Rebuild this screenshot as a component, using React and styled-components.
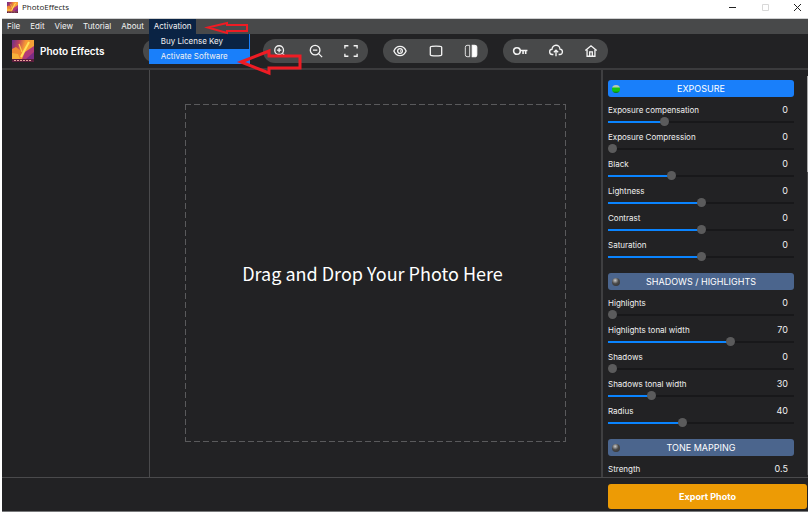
import React, { useId, useState } from 'react'
import styled, { createGlobalStyle } from 'styled-components'

const GlobalStyle = createGlobalStyle`
    * {
        box-sizing: border-box;
    }

    body {
        margin: 0;
        background: #ffffff;
        font-family: Inter, 'Liberation Sans', sans-serif;
    }

    button {
        margin: 0;
        padding: 0;
        border: 0;
        background: none;
        color: inherit;
        font: inherit;
    }
`

const Window = styled.div`
    position: relative;
    display: flex;
    flex-direction: column;
    height: 100vh;
    padding: 0 2px 3px;
`

const TitleBar = styled.header`
    display: flex;
    align-items: center;
    flex: none;
    height: 18px;
    padding: 0 6px 4px 5px;
    gap: 4px;
    color: #222222;
    font-family: 'Open Sans', sans-serif;
    font-size: 8px;
    line-height: 14px;
`

const WindowButtons = styled.div`
    display: flex;
    margin-left: auto;
    gap: 22px;

    button {
        display: flex;
        width: 10px;
        height: 10px;
    }
`

const MenuBar = styled.nav`
    display: flex;
    flex: none;
    height: 16px;
    border-top: 1px solid #cfd0d1;
    background: #48494a;
    color: #f2f2f2;
    font-size: 8px;
    line-height: 15px;
`

const MenuEntry = styled.div`
    position: relative;
    background: ${({ $open }) => ($open ? '#0a2344' : 'transparent')};

    > button {
        height: 15px;
        padding: 0 5px;
    }
`

const Dropdown = styled.div`
    position: absolute;
    top: 15px;
    left: 0;
    z-index: 2;
    width: 101px;
    border-right: 1px solid #197ffa;
    background: #0a2344;
`

const DropdownItem = styled.button`
    display: block;
    width: 100%;
    height: 15px;
    padding-left: 12px;
    background: ${({ $active }) => ($active ? '#197ffa' : 'transparent')};
    text-align: left;
    white-space: nowrap;
`

const ToolBar = styled.div`
    display: flex;
    align-items: center;
    flex: none;
    height: 36px;
    gap: 15px;
    border-bottom: 2px solid #3b3b3d;
    background: #222224;
`

const Brand = styled.div`
    display: flex;
    align-items: center;
    width: 126px;
    padding-left: 10px;
    gap: 6px;
    color: #ffffff;
    font-size: 10px;
    font-weight: 600;
    white-space: nowrap;
`

const ToolGroup = styled.div`
    display: flex;
    align-items: center;
    justify-content: space-between;
    width: 105px;
    height: 24px;
    padding: 0 9px;
    border-radius: 12px;
    background: #48494a;
`

const ToolButton = styled.button`
    display: flex;
    align-items: center;
    justify-content: center;
    width: 16px;
    height: 16px;
`

const Workspace = styled.main`
    display: grid;
    grid-template-columns: 148px 1fr 207px;
    flex: 1;
    min-height: 0;
    background: #222224;
`

const Library = styled.aside`
    border-right: 1px solid #4a4a4c;
`

const Stage = styled.section`
    display: flex;
    padding: 34px 35px 35px;
`

const dash = (dir) => `repeating-linear-gradient(${dir}, #5a5a5c 0 6px, transparent 6px 9px)`

const DropZone = styled.div`
    display: flex;
    align-items: center;
    justify-content: center;
    flex: 1;
    padding-right: 6px;
    background:
        ${dash('to right')} top / 100% 1px no-repeat,
        ${dash('to right')} bottom / 100% 1px no-repeat,
        ${dash('to bottom')} left / 1px 100% no-repeat,
        ${dash('to bottom')} right / 1px 100% no-repeat;
    color: #ffffff;
    font-family: 'Noto Sans CJK JP', sans-serif;
    font-size: 18px;
`

const Panel = styled.aside`
    display: grid;
    grid-template-columns: 1fr 1px;
    min-height: 0;
    padding: 6px 0 2px;
    border-left: 2px solid #3f3f41;
`

const PanelList = styled.div`
    min-height: 0;
    padding: 4px 13px 0 5px;
    overflow-y: auto;
    scrollbar-width: none;
`

const ScrollTrack = styled.div`
    background: #4a4a4c;
`

const ScrollThumb = styled.div`
    height: 24%;
    background: #a8a8a8;
`

const Section = styled.section`
    padding-bottom: 8px;
`

const SectionHeader = styled.button`
    display: flex;
    align-items: center;
    width: 100%;
    height: 17px;
    margin-bottom: 6px;
    padding: 0 4px;
    border-radius: 3px;
    background: ${({ $on }) => ($on ? '#197ffa' : '#4b658d')};
    color: #ffffff;
    font-size: 9px;

    span {
        flex: 1;
        padding-right: 8px;
    }
`

const Led = styled.i`
    width: 8px;
    height: 8px;
    border-radius: 50%;
    background: ${({ $on }) =>
        $on
            ? 'linear-gradient(#b9c8b4 0 2px, #14c414 3px 6px, #0b6a1c)'
            : 'radial-gradient(circle at 40% 30%, #c9c9c9, #4a4a4a 45%, #2c2c2e)'};
`

const SliderRow = styled.div`
    display: grid;
    grid-template-columns: 1fr auto;
    grid-template-rows: 14px 9px;
    height: 27px;
    color: #f0f0f0;
    font-size: 8px;
    line-height: 14px;

    output {
        padding-right: 6px;
        font-size: 9px;
        line-height: 13px;
    }
`

const Range = styled.input`
    grid-column: 1 / -1;
    width: 100%;
    height: 9px;
    margin: 0;
    appearance: none;
    background: linear-gradient(
            to right,
            #0a84ff var(--fill),
            #18181a var(--fill)
        )
        center / 100% 2px no-repeat;

    &::-webkit-slider-thumb {
        appearance: none;
        width: 9px;
        height: 9px;
        border-radius: 50%;
        background: #5b5b5c;
    }
`

const Footer = styled.footer`
    display: flex;
    justify-content: flex-end;
    flex: none;
    height: 35px;
    padding: 6px 1px 2px;
    border-top: 1px solid #4a4a4c;
    border-bottom: 1px solid #77787a;
    background: #222224;
`

const ExportButton = styled.button`
    width: 199px;
    border-radius: 3px;
    background: #ed9b05;
    color: #ffffff;
    font-size: 9px;
    font-weight: 700;
`

const Arrows = styled.svg`
    position: absolute;
    top: 0;
    left: 200px;
    z-index: 3;
    pointer-events: none;
`

const Logo = ({ size }) => {
    const id = useId()
    return (
        <svg width={size} height={size} viewBox="0 0 22 22" aria-hidden="true">
            <defs>
                <linearGradient id={id} x1="0" y1="0" x2="1" y2="0.3">
                    <stop offset="0" stopColor="#6a2f8c" />
                    <stop offset="0.3" stopColor="#b8405f" />
                    <stop offset="0.6" stopColor="#f79a34" />
                    <stop offset="1" stopColor="#f5a437" />
                </linearGradient>
            </defs>
            <rect width="22" height="22" fill={`url(#${id})`} />
            <path d="M0 9l4-2 6 5-2 7H0z" fill="#f08a32" />
            <path d="M0 13l6 1 2 5H0z" fill="#f8b13a" />
            <path d="M22 6v13H10l3-7z" fill="#b13a78" />
            <path d="M22 12v7h-8z" fill="#7b2c83" />
            <path d="M7 4l3 8" stroke="#fbd04a" strokeWidth="1.200" />
            <path d="M17 2L9 17" stroke="#ffe25a" strokeWidth="2" />
            <rect y="19" width="22" height="3" fill="#5a1c3c" />
            <path d="M2 20.500h18" stroke="#e8a09a" strokeDasharray="2 1" />
        </svg>
    )
}

const icons = {
    zoomIn: <><circle cx="7" cy="7" r="5" /><path d="M11 11l3 3M7 4.500v5M4.500 7h5" /></>,
    zoomOut: <><circle cx="7" cy="7" r="5.500" /><path d="M11 11l4 4M4.500 7h5" /></>,
    fit: <path d="M1 5V2h4M11 2h4v3M15 11v3h-4M5 14H1v-3" />,
    eye: <><path d="M1 8C2.500 4.300 5 2.700 8 2.700s5.500 1.600 7 5.300c-1.500 3.700-4 5.300-7 5.300S2.500 11.700 1 8z" /><circle cx="8" cy="8" r="2.700" /><path d="M8 8h1" /></>,
    frame: <path d="M3 2.800Q8 2 13 2.800q1.800 0 1.500 1.700v7q.3 1.700-1.500 1.700-5 .8-10 0-1.800 0-1.500-1.700v-7Q1.200 2.800 3 2.800z" />,
    compare: <><path d="M6.500 1.500H3.500q-2 0-2 2.500v8q0 2.500 2 2.500h3z" strokeWidth="1" /><path d="M9.500 1.500H12q2.500 0 2.500 2.500v8q0 2.500-2.500 2.500H9.500z" fill="#ffffff" /></>,
    key: <><circle cx="4.500" cy="8" r="3.800" strokeWidth="1.800" /><path d="M8 7.500h8.500M11.500 8v3.500M14.500 8v3.500" strokeWidth="1.800" /></>,
    upload: <path d="M5 12H4a3 3 0 0 1-.5-6 4.500 4.500 0 0 1 9-.2A3 3 0 0 1 12 12h-1M8 14V7M5.500 9.500L8 7l2.500 2.500" />,
    home: <path d="M1.500 7.500L8 2l6.500 5.500M3.500 6.500v7.500h9V6.500M6.500 14V9h3v5" />,
}

const toolGroups = [
    [],
    [['Zoom in', 'zoomIn'], ['Zoom out', 'zoomOut'], ['Fit to screen', 'fit']],
    [['Preview', 'eye'], ['Single view', 'frame'], ['Compare', 'compare']],
    [['License key', 'key'], ['Upload', 'upload'], ['Home', 'home']],
]

const sections = [
    {
        title: 'EXPOSURE',
        on: true,
        sliders: [
            ['Exposure compensation', -5, 12, 0],
            ['Exposure Compression', 0, 100, 0],
            ['Black', -50, 100, 0],
            ['Lightness', -100, 100, 0],
            ['Contrast', -100, 100, 0],
            ['Saturation', -100, 100, 0],
        ],
    },
    {
        title: 'SHADOWS / HIGHLIGHTS',
        sliders: [
            ['Highlights', 0, 100, 0],
            ['Highlights tonal width', 10, 100, 70],
            ['Shadows', 0, 100, 0],
            ['Shadows tonal width', 10, 100, 30],
            ['Radius', 1, 100, 40],
        ],
    },
    {
        title: 'TONE MAPPING',
        sliders: [['Strength', 0, 2, 0.5, 0.1]],
    },
]

const Slider = ({ label, min, max, initial, step = 1 }) => {
    const id = useId()
    const [value, setValue] = useState(initial)
    const fill = ((value - min) / (max - min)) * 100

    return (
        <SliderRow>
            <label htmlFor={id}>{label}</label>
            <output htmlFor={id}>{value}</output>
            <Range
                id={id}
                type="range"
                min={min}
                max={max}
                step={step}
                value={value}
                onChange={(e) => setValue(Number(e.target.value))}
                style={{ '--fill': `${fill}%` }}
            />
        </SliderRow>
    )
}

export default function App() {
    return (
        <Window>
            <GlobalStyle />
            <TitleBar>
                <Logo size={11} />
                <span>PhotoEffects</span>
                <WindowButtons>
                    <button aria-label="Minimize">
                        <svg width="10" height="10" stroke="#222222"><path d="M1 5.500h7" /></svg>
                    </button>
                    <button aria-label="Maximize">
                        <svg width="10" height="10" stroke="#d8d8d8" fill="none"><path d="M2.500 2.500h6v6h-6z" /></svg>
                    </button>
                    <button aria-label="Close">
                        <svg width="10" height="10" stroke="#222222"><path d="M2 2l7 7M9 2l-7 7" /></svg>
                    </button>
                </WindowButtons>
            </TitleBar>

            <MenuBar>
                {['File', 'Edit', 'View', 'Tutorial', 'About'].map((name) => (
                    <MenuEntry key={name}>
                        <button>{name}</button>
                    </MenuEntry>
                ))}
                <MenuEntry $open>
                    <button aria-expanded="true">Activation</button>
                    <Dropdown>
                        <DropdownItem>Buy License Key</DropdownItem>
                        <DropdownItem $active>Activate Software</DropdownItem>
                    </Dropdown>
                </MenuEntry>
            </MenuBar>

            <ToolBar>
                <Brand>
                    <Logo size={22} />
                    Photo Effects
                </Brand>
                {toolGroups.map((tools, i) => (
                    <ToolGroup key={i}>
                        {tools.map(([label, icon]) => (
                            <ToolButton key={icon} aria-label={label}>
                                <svg width="14" height="14" viewBox="0 0 16 16" fill="none" stroke="#f4f4f4" strokeWidth="1.500" overflow="visible">
                                    {icons[icon]}
                                </svg>
                            </ToolButton>
                        ))}
                    </ToolGroup>
                ))}
            </ToolBar>

            <Workspace>
                <Library />
                <Stage>
                    <DropZone>Drag and Drop Your Photo Here</DropZone>
                </Stage>
                <Panel>
                    <PanelList>
                        {sections.map(({ title, on, sliders }) => (
                            <Section key={title}>
                                <SectionHeader $on={on}>
                                    <Led $on={on} />
                                    <span>{title}</span>
                                </SectionHeader>
                                {sliders.map(([label, min, max, initial, step]) => (
                                    <Slider key={label} label={label} min={min} max={max} initial={initial} step={step} />
                                ))}
                            </Section>
                        ))}
                    </PanelList>
                    <ScrollTrack>
                        <ScrollThumb />
                    </ScrollTrack>
                </Panel>
            </Workspace>

            <Footer>
                <ExportButton>Export Photo</ExportButton>
            </Footer>

            <Arrows width="110" height="80" fill="none" stroke="#ee1c24" aria-hidden="true">
                <path d="M8 27.500L27 23v2h20v6H27v2z" strokeWidth="2" />
                <path d="M41 62L69 51v5h31v12H69v5z" strokeWidth="3" />
            </Arrows>
        </Window>
    )
}
